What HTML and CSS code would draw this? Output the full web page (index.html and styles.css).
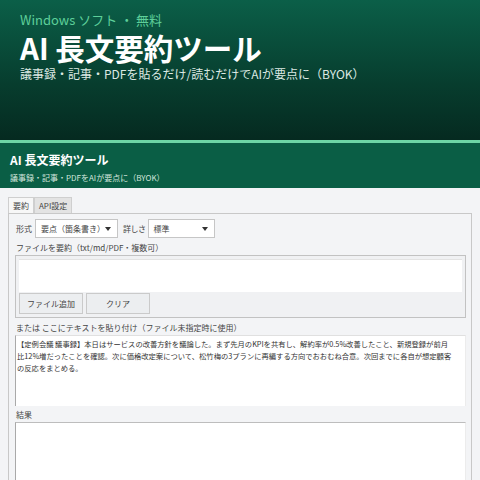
FILE: index.html
```html
<!DOCTYPE html>
<html lang="ja">
<head>
	<meta charset="UTF-8">
	<title>AI 長文要約ツール</title>
	<link rel="stylesheet" href="styles.css">
</head>
<body>

<div class="hero">
	<p class="hero_tag">Windows ソフト ・ 無料</p>
	<h1 class="hero_title">AI 長文要約ツール</h1>
	<p class="hero_sub">議事録・記事・PDFを貼るだけ/読むだけでAIが要点に（BYOK）</p>
</div>
<div class="stripe"></div>

<div class="app_bar">
	<h2>AI 長文要約ツール</h2>
	<p>議事録・記事・PDFをAIが要点に（BYOK）</p>
</div>

<div class="content">
	<ul class="tabs">
		<li class="active">要約</li>
		<li>API設定</li>
	</ul>
	<div class="panel">
		<div class="row">
			<span class="lbl">形式</span>
			<div class="combo w1">要点（箇条書き）<i></i></div>
			<span class="lbl lbl2">詳しさ</span>
			<div class="combo w2">標準<i></i></div>
		</div>

		<div class="cap">ファイルを要約（txt/md/PDF・複数可）</div>
		<div class="group">
			<div class="file_list"></div>
			<div class="btns">
				<button>ファイル追加</button>
				<button>クリア</button>
			</div>
		</div>

		<div class="cap">または ここにテキストを貼り付け（ファイル未指定時に使用）</div>
		<div class="box src">【定例会議 議事録】本日はサービスの改善方針を議論した。まず先月のKPIを共有し、解約率が0.5%改善したこと、新規登録が前月<br>比12%増だったことを確認。次に価格改定案について、松竹梅の3プランに再編する方向でおおむね合意。次回までに各自が想定顧客<br>の反応をまとめる。</div>

		<div class="cap cap_result">結果</div>
		<div class="box result"></div>
	</div>
</div>

</body>
</html>
```

FILE: styles.css
```css
*{
	margin: 0;
	padding: 0;
	box-sizing: border-box;
}
li{
	list-style: none;
}
body{
	width: 480px;
	height: 480px;
	overflow: hidden;
	background: #f3f4f6;
	font-family: "Noto Sans CJK JP", "Noto Sans", sans-serif;
	color: #333;
}

/* top banner */
.hero{
	height: 140px;
	padding: 11px 20px 0;
	background: linear-gradient(180deg, #0b5f48 0%, #073d2e 60%, #052a20 100%);
	color: #fff;
}
.hero_tag{
	font-size: 13px;
	line-height: 18px;
	color: #5dcf9a;
}
.hero_title{
	font-size: 29.5px;
	line-height: 36px;
	font-weight: bold;
}
.hero_sub{
	font-size: 12px;
	line-height: 18px;
	color: #dce9e3;
}
.stripe{
	height: 3px;
	background: #6dd6a6;
}

/* window title bar */
.app_bar{
	height: 45px;
	padding: 9px 10px 0;
	background: #0a5e45;
	color: #fff;
}
.app_bar h2{
	font-size: 12px;
	line-height: 16px;
	font-weight: bold;
}
.app_bar p{
	font-size: 8px;
	line-height: 12px;
	margin-top: 4px;
	color: #d2e6dd;
}

.content{
	padding: 9px 8px 0;
	font-size: 8px;
	color: #444;
}
.tabs{
	display: flex;
	height: 16px;
}
.tabs li{
	padding: 0 4px;
	line-height: 15px;
	border: 1px solid #cfcfcf;
	border-bottom: none;
	background: #e3e3e3;
}
.tabs .active{
	background: #f7f7f7;
}
.panel{
	border: 1px solid #c8c8c8;
	height: 300px;
	padding: 5px 6px 0 5px;
	background: #f3f4f6;
}

.row{
	display: flex;
	align-items: center;
	height: 19px;
}
.lbl{
	margin: 0 3px 0 2px;
}
.lbl2{
	margin: 0 2px 0 5px;
	letter-spacing: -0.5px;
}
.combo{
	position: relative;
	height: 19px;
	line-height: 17px;
	padding-left: 5px;
	border: 1px solid #c6c6c6;
	background: #fff;
}
.combo i{
	position: absolute;
	right: 6px;
	top: 7px;
	border-left: 3px solid transparent;
	border-right: 3px solid transparent;
	border-top: 4px solid #333;
}
.w1{
	width: 83px;
}
.w2{
	width: 67px;
}

.cap{
	line-height: 12px;
	margin: 4px 0 1px 2px;
}
.cap_result{
	margin-top: 3px;
}

.group{
	margin-left: 1px;
	width: 451px;
	height: 63px;
	border: 1px solid #c2c2c2;
	padding: 3px 3px 0 3px;
	background: #f0f1f3;
}
.file_list{
	height: 33px;
	background: #fff;
	border-top: 1px solid #e3e3e3;
}
.btns{
	display: flex;
	gap: 3px;
	margin-top: 1px;
}
.btns button{
	width: 64px;
	height: 21px;
	font-family: inherit;
	font-size: 8px;
	color: #444;
	background: #eceef0;
	border: 1px solid #cacaca;
}

.box{
	margin-left: 1px;
	width: 451px;
	background: #fff;
	border-top: 1px solid #e0e0e0;
	border-left: 1px solid #a9a9a9;
	border-right: 1px solid #ececec;
	color: #333;
}
.src{
	height: 71px;
	padding: 2px 1px;
	font-size: 7.3px;
	line-height: 12px;
	white-space: nowrap;
	overflow: hidden;
}
.result{
	height: 70px;
	border-top-color: #bdbdbd;
}
```
